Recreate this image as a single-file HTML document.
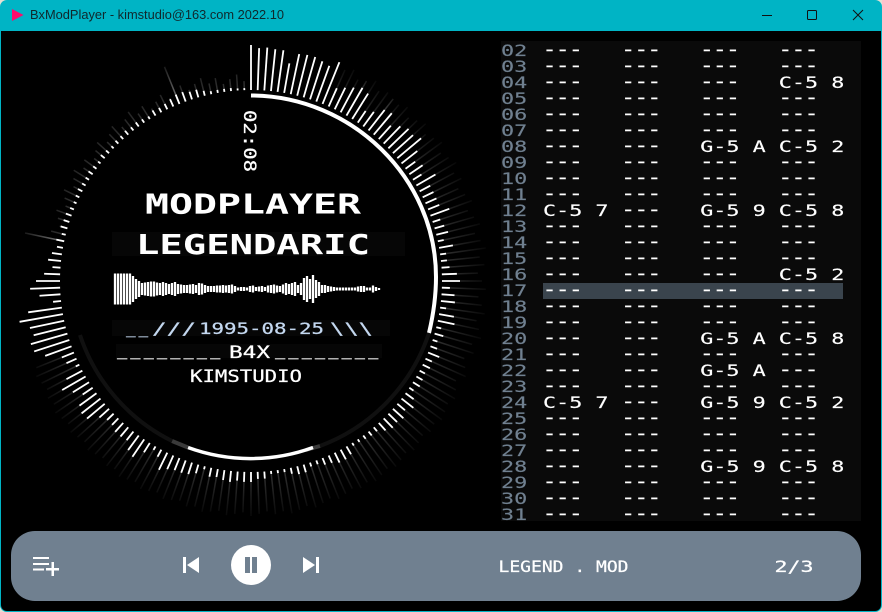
<!DOCTYPE html>
<html><head><meta charset="utf-8"><title>BxModPlayer</title>
<style>
html,body{margin:0;padding:0;width:882px;height:612px;overflow:hidden;background:#e4e0d4}
#win{position:absolute;left:0;top:0;width:882px;height:612px;background:#00b4c5;border-radius:7px;overflow:hidden}
#main{position:absolute;left:1px;top:31px;width:880px;height:580px;background:#000;border-radius:0 0 6px 6px}
#panel{position:absolute;left:501px;top:41px;width:360px;height:480px;background:#0a0a0a}
#hl{position:absolute;left:543px;top:283px;width:300px;height:16px;background:#3a444d}
pre{position:absolute;margin:0;font:16px/16px "DejaVu Sans Mono","Liberation Mono",monospace;transform-origin:0 0;transform:scaleX(1.36);-webkit-text-stroke:.15px currentColor}
#nums{left:500.500px;top:43px;color:#708090}
#notes{left:542.500px;top:43px;color:#fff}
#dashes{left:542.500px;top:42px;color:#fff;-webkit-text-stroke:.5px #fff}
#bar{position:absolute;left:11px;top:531px;width:850px;height:70px;background:#708090;border-radius:24px}
svg{position:absolute;left:0;top:0}
text{font-family:"DejaVu Sans Mono","Liberation Mono",monospace}
.s text{stroke:currentColor;stroke-width:.25px}
</style></head><body>
<div id="win">
<div id="main"></div>
<div id="panel"></div>
<div id="hl"></div>
<pre id="nums">02
03
04
05
06
07
08
09
10
11
12
13
14
15
16
17
18
19
20
21
22
23
24
25
26
27
28
29
30
31</pre>
<pre id="dashes">---   ---   ---   ---
---   ---   ---   ---
---   ---   ---
---   ---   ---   ---
---   ---   ---   ---
---   ---   ---   ---
---   ---
---   ---   ---   ---
---   ---   ---   ---
---   ---   ---   ---
      ---
---   ---   ---   ---
---   ---   ---   ---
---   ---   ---   ---
---   ---   ---
---   ---   ---   ---
---   ---   ---   ---
---   ---   ---   ---
---   ---
---   ---   ---   ---
---   ---         ---
---   ---   ---   ---
      ---
---   ---   ---   ---
---   ---   ---   ---
---   ---   ---   ---
---   ---
---   ---   ---   ---
---   ---   ---   ---
---   ---   ---   ---</pre>
<pre id="notes">


                  C-5 8



            G-5 A C-5 2



C-5 7       G-5 9 C-5 8



                  C-5 2



            G-5 A C-5 8

            G-5 A

C-5 7       G-5 9 C-5 2



            G-5 9 C-5 8


</pre>
<div id="bar"></div>
<svg width="882" height="612" viewBox="0 0 882 612">
<defs>
<linearGradient id="fg" gradientUnits="userSpaceOnUse" x1="0" y1="-195" x2="0" y2="-245">
<stop offset="0" stop-color="#303030"/><stop offset="1" stop-color="#000"/>
</linearGradient>
<linearGradient id="fh" gradientUnits="userSpaceOnUse" x1="0" y1="-195" x2="0" y2="-235">
<stop offset="0" stop-color="#777"/><stop offset="1" stop-color="#111"/>
</linearGradient>
</defs>
<!-- title bar -->
<path d="M12 9L23.500 15L12 21Z" fill="#ff0a6c"/>
<text x="30" y="19" textLength="254" lengthAdjust="spacingAndGlyphs" style="font-family:'Liberation Sans',sans-serif;font-size:12.5px" fill="#10282c">BxModPlayer - kimstudio@163.com 2022.10</text>
<path d="M762 15.500H772" stroke="#111" stroke-width="1" fill="none"/>
<rect x="807.500" y="10.500" width="9" height="9" rx="1" stroke="#111" fill="none"/>
<path d="M853 10L863 20M863 10L853 20" stroke="#111" fill="none"/>

<!-- ring -->
<g id="spikes" transform="translate(251 281)" fill="none"></g>
<g fill="none" stroke-width="4">
<path d="M251 95.500C352 96 436 178 436 277C436 297 433 316 429 333" stroke="#fff"/>
<path d="M429 333A182 182 0 0 1 320 446" stroke="#101010"/>
<path d="M320 446L306 450" stroke="#3a3a3a"/>
<path d="M313 447.500A182 182 0 0 1 188 447.500" stroke="#fff" stroke-width="3.500"/>
<path d="M188 447.500L172 441" stroke="#3a3a3a"/>
<path d="M172 441A182 182 0 0 1 80 335" stroke="#101010"/>
</g>

<!-- faint text-background blocks -->
<g fill="#060606">
<rect x="112" y="232" width="293" height="24"/>
<rect x="112" y="320" width="278" height="16"/>
<rect x="116" y="344" width="266" height="14"/>
</g>

<!-- player text -->
<g class="s" fill="#fff" color="#fff">
<text transform="translate(244 110) rotate(90)" textLength="62" lengthAdjust="spacingAndGlyphs" font-size="17">02:08</text>
</g>
<g fill="#fff" font-weight="bold">
<text x="145" y="213.500" font-size="27.500" textLength="216" lengthAdjust="spacingAndGlyphs">MODPLAYER</text>
<text x="136" y="254" font-size="27.500" textLength="234" lengthAdjust="spacingAndGlyphs">LEGENDARIC</text>
</g>
<g id="wave" stroke="#fff" stroke-width="2.300" fill="none"></g>
<g class="s" fill="#c4d8f0" color="#c4d8f0" font-size="16">
<text x="126 138.500" y="333.500">__</text>
<text x="152" y="334" textLength="44" lengthAdjust="spacingAndGlyphs">///</text>
<text x="199" y="334" textLength="125" lengthAdjust="spacingAndGlyphs">1995-08-25</text>
<text x="330" y="334" textLength="43" lengthAdjust="spacingAndGlyphs">\\\</text>
</g>
<g class="s" fill="#fff" color="#fff" font-size="17">
<text x="117 130.300 143.600 156.900 170.200 183.500 196.800 210.100" y="355">________</text>
<text x="229" y="358" textLength="41" lengthAdjust="spacingAndGlyphs">B4X</text>
<text x="275 288.300 301.600 314.900 328.200 341.500 354.800 368.100" y="355">________</text>
<text x="190" y="382" textLength="112" lengthAdjust="spacingAndGlyphs">KIMSTUDIO</text>
<text x="498.500" y="572" textLength="130" lengthAdjust="spacingAndGlyphs" font-size="16">LEGEND . MOD</text>
<text x="774.500" y="572" textLength="39" lengthAdjust="spacingAndGlyphs" font-size="16">2/3</text>
</g>

<!-- controls -->
<g fill="#fff">
<rect x="33" y="557" width="16" height="2"/>
<rect x="33" y="563" width="16" height="2"/>
<rect x="33" y="568.500" width="11" height="2"/>
<rect x="46" y="568" width="13" height="2.500"/>
<rect x="51.500" y="562" width="2.500" height="14"/>
<rect x="183" y="557" width="3" height="16"/>
<path d="M199 557V573L187 565Z"/>
<circle cx="251" cy="565" r="20"/>
<path d="M303 557V573L315 565Z"/>
<rect x="316" y="557" width="3" height="16"/>
</g>
<rect x="245" y="557" width="5" height="16" fill="#708090"/>
<rect x="252" y="557" width="5" height="16" fill="#708090"/>
</svg>
</div>
<script>
var b=[45,42,43,42,42,30,41,42,42,40,38,45,
20,24,28,32,30,14,18,26,28,18,24,28,27,31,20,12,16,10,
22,12,12,12,12,20,8,10,12,6,
14,6,6,8,15,18,8,13,14,6,
15,17,5,9,5,7,12,7,8,6,
7,8,5,10,15,10,14,12,13,10,
5,5,4,3,3,9,11,11,8,7,
4,4,8,8,6,3,3,3,7,7,
10,10,9,11,10,8,9,3,9,12,
13,13,15,19,8,4,11,21,18,11,
12,12,9,9,13,23,24,21,12,19,
27,18,4,11,13,28,37,38,33,35,
44,34,8,21,30,24,16,8,13,10,
6,8,4,7,6,6,4,3,4,5,
4,4,5,4,3,5,4,3,4,4,
5,4,5,4,3,6,5,6,8,10,
10,8,8,5,3,3,3,3,2,2];
var s='';
for(var i=0;i<180;i++){
 var h=i*37%11,f=0,c='url(#fg)';
 if(i>=12&&i<60)f=36+h;
 else if(i>=60&&i<125)f=40+h/2;
 else if(i>=141)f=8+h;
 if(i==141||i==169||i==15||i==19){f=40;c='url(#fh)';}
 var t='transform="rotate('+(i*2)+')"';
 if(f)s+='<path '+t+' d="M0-191v-'+f+'" stroke="'+c+'" stroke-width="1.5"/>';
 s+='<path '+t+' d="M0-191v-'+b[i]+'" stroke="#fff" stroke-width="1.800"/>';
}
document.getElementById('spikes').innerHTML=s;
var w=[31,31,31,31,31,31,26,20,16,12,13,14,15,15,13,12,14,12,10,12,14,10,9,8,8,9,10,8,12,11,8,6,6,6,7,7,8,7,8,9,6,3,4,4,3,6,7,4,5,6,4,7,8,9,7,6,9,12,10,12,14,8,12,22,26,20,28,18,14,8,8,6,5,4,3,3,3,3,3,3,3,5,6,6,3,3,7,4,2];
var p='';
for(var j=0;j<w.length;j++){p+='M'+(115+j*3)+' '+(289-w[j]/2)+'v'+w[j];}
document.getElementById('wave').innerHTML='<path d="'+p+'"/>';
</script>
</body></html>
